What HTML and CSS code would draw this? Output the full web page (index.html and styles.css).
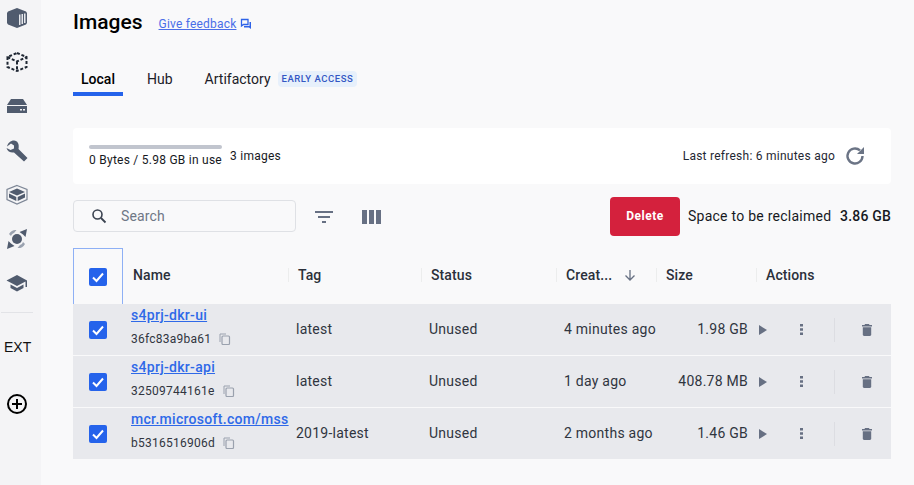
FILE: index.html
```html
<!DOCTYPE html>
<html>
<head>
  <title>Images</title>
  <link rel="stylesheet" href="styles.css">
</head>
<body>

  <div class="app">
    <div class="sidebar">
      <svg class="nav-icon" viewBox="0 0 22 22"><path d="M11 1 20 4.500 21 6V16L20 17.500 11 21 2 17.500 1 16V6L2 4.500Z" fill="#505b6e"/><path d="M13 7.500h1.500V18H13zM15.500 7h1.500V17h-1.500zM18 6.500h1.500V16H18z" fill="#e6e8ec"/></svg>
      <svg class="nav-icon" viewBox="0 0 22 22"><path d="M11 2 20.500 6V16L11 20 1.500 16V6ZM1.500 6 11 10.500 20.500 6M11 10.500V20" fill="none" stroke="#1f2733" stroke-width="2" stroke-dasharray="3 1.800"/></svg>
      <svg class="nav-icon" viewBox="0 0 22 22"><path d="M5 4H17L21 10H1Z" fill="#505b6e"/><path d="M1 11H21V18H1Z" fill="#505b6e"/><path d="M14 14h2v1.500h-2zM17 14h2v1.500h-2z" fill="#f3f4f6"/></svg>
      <svg class="nav-icon" viewBox="0 0 22 22"><path d="M8 .500C4.500 .500 2 3 1 6.500L5 3.500 8 5.500V8.500L4.500 10 .500 8C1.500 11.500 4.500 13 8 12.500L18 21.500 21.500 18 12.500 9C13.500 4 11.500 .500 8 .500Z" fill="#505b6e"/></svg>
      <svg class="nav-icon" viewBox="0 0 22 22"><path d="M11 4.500 19 8 11 11.500 3 8Z" fill="#505b6e"/><path d="M3 9.500 10.300 13V17L3 13.500ZM19 9.500 11.700 13V17L19 13.500Z" fill="#505b6e"/><path d="M11 1.500 21 5.500V15.500L11 20 1 15.500V5.500Z" fill="none" stroke="#7d8696" stroke-width="1.200"/></svg>
      <svg class="nav-icon" viewBox="0 0 22 22"><circle cx="11" cy="11" r="5" fill="#505b6e"/><path d="M3 6C5 2.500 8 1.500 10.500 2L8 5C6.500 5.500 5.500 6.500 5 8Z" fill="#9aa2b0"/><path d="M21 1 19.500 9 17 6.500 13.500 4Z" fill="#505b6e"/><path d="M19 16C17 19.500 14 20.500 11.500 20L14 17C15.500 16.500 16.500 15.500 17 14Z" fill="#9aa2b0"/><path d="M1 21 2.500 13 5 15.500 8.500 18Z" fill="#505b6e"/></svg>
      <svg class="nav-icon" viewBox="0 0 22 22"><path d="M11 3 .500 8.500 11 14 19.500 9.500V15H21V8.500Z" fill="#505b6e"/><path d="M4.500 12.500V16L11 19.500 17.500 16V12.500L11 16Z" fill="#505b6e"/></svg>
      <div class="side-line"></div>
      <div class="ext-label">EXT</div>
      <svg class="add-icon" viewBox="0 0 22 22"><circle cx="11" cy="11" r="9" fill="none" stroke="#000" stroke-width="2"/><path d="M11 6v10M6 11h10" stroke="#000" stroke-width="2"/></svg>
    </div>

    <div class="content">
      <div class="title-row">
        <span class="page-title">Images</span>
        <a class="feedback">Give feedback</a>
        <svg class="feedback-icon" viewBox="0 0 12 12"><path d="M1.500 1.500H8V6.500H3.500L1.500 8Z" fill="none" stroke="#2e63e8" stroke-width="1.300"/><path d="M9.500 4H11V11L9 9.500H4V8H9.500Z" fill="#2e63e8"/></svg>
      </div>

      <div class="tabs">
        <div class="tab tab-active">Local</div>
        <div class="tab tab-hub">Hub</div>
        <div class="tab tab-art">Artifactory</div>
        <span class="early">EARLY ACCESS</span>
      </div>

      <div class="usage">
        <div class="usage-left">
          <div class="usage-bar"></div>
          <div class="usage-text">0 Bytes / 5.98 GB in use</div>
        </div>
        <div class="image-count">3 images</div>
        <div class="refresh">Last refresh: 6 minutes ago</div>
        <svg class="refresh-icon" viewBox="0 0 24 24"><path d="M19.500 12A7.500 7.500 0 1 1 17 6.400" fill="none" stroke="#6b7485" stroke-width="2.400"/><path d="M21 3V10H14Z" fill="#6b7485"/></svg>
      </div>

      <div class="toolbar">
        <div class="search">
          <svg class="search-icon" viewBox="0 0 16 16"><circle cx="6.500" cy="6.500" r="4.500" fill="none" stroke="#3b4350" stroke-width="1.600"/><path d="M10 10l4.500 4.500" stroke="#3b4350" stroke-width="1.800"/></svg>
          <span class="search-text">Search</span>
        </div>
        <svg class="filter-icon" viewBox="0 0 18 12"><path d="M0 0H18V2H0ZM3 5H15V7H3ZM7 10H11V12H7Z" fill="#677083"/></svg>
        <svg class="columns-icon" viewBox="0 0 19 14"><path d="M0 0H5V14H0ZM7 0H12V14H7ZM14 0H19V14H14Z" fill="#677083"/></svg>
        <button class="delete-btn">Delete</button>
        <span class="reclaim">Space to be reclaimed</span>
        <b class="reclaim-size">3.86 GB</b>
      </div>

      <div class="table">
        <div class="row head">
          <div class="check-cell focus"><span class="checkbox"><svg viewBox="0 0 18 18"><path d="M4 9.500 7.500 13 14 5.500" fill="none" stroke="#fff" stroke-width="2"/></svg></span></div>
          <div class="th">Name</div>
          <div class="th sep">Tag</div>
          <div class="th sep">Status</div>
          <div class="th sep">Creat...
            <svg class="sort-icon" viewBox="0 0 12 12"><path d="M6 1V11M1.500 6.500 6 11 10.500 6.500" fill="none" stroke="#677083" stroke-width="1.300"/></svg>
          </div>
          <div class="th sep">Size</div>
          <div class="th sep end">Actions</div>
        </div>

        <div class="row item">
          <div class="check-cell"><span class="checkbox"><svg viewBox="0 0 18 18"><path d="M4 9.500 7.500 13 14 5.500" fill="none" stroke="#fff" stroke-width="2"/></svg></span></div>
          <div class="name-cell">
            <a class="image-name">s4prj-dkr-ui</a>
            <div class="image-id">36fc83a9ba61
              <svg class="copy-icon" viewBox="0 0 12 12"><path d="M1 9V1H7" fill="none" stroke="#9aa1ae" stroke-width="1"/><rect x="3" y="3" width="7.500" height="8.500" rx="1" fill="none" stroke="#9aa1ae" stroke-width="1.200"/></svg>
            </div>
          </div>
          <div class="td">latest</div>
          <div class="td">Unused</div>
          <div class="td">4 minutes ago</div>
          <div class="td size">1.98 GB</div>
          <div class="actions">
            <svg class="play" viewBox="0 0 8 10"><path d="M0 0 8 5 0 10Z" fill="#677083"/></svg>
            <svg class="dots" viewBox="0 0 3 11"><path d="M0 0H3V2.500H0ZM0 4.200H3V6.700H0ZM0 8.500H3V11H0Z" fill="#677083"/></svg>
            <span class="act-line"></span>
            <svg class="trash" viewBox="0 0 10 12"><path d="M3 0H7L7.500 1H10V2.400H0V1H2.500ZM.8 3.200H9.200V11L8.200 12H1.800L.8 11Z" fill="#677083"/></svg>
          </div>
        </div>

        <div class="row item">
          <div class="check-cell"><span class="checkbox"><svg viewBox="0 0 18 18"><path d="M4 9.500 7.500 13 14 5.500" fill="none" stroke="#fff" stroke-width="2"/></svg></span></div>
          <div class="name-cell">
            <a class="image-name">s4prj-dkr-api</a>
            <div class="image-id">32509744161e
              <svg class="copy-icon" viewBox="0 0 12 12"><path d="M1 9V1H7" fill="none" stroke="#9aa1ae" stroke-width="1"/><rect x="3" y="3" width="7.500" height="8.500" rx="1" fill="none" stroke="#9aa1ae" stroke-width="1.200"/></svg>
            </div>
          </div>
          <div class="td">latest</div>
          <div class="td">Unused</div>
          <div class="td">1 day ago</div>
          <div class="td size">408.78 MB</div>
          <div class="actions">
            <svg class="play" viewBox="0 0 8 10"><path d="M0 0 8 5 0 10Z" fill="#677083"/></svg>
            <svg class="dots" viewBox="0 0 3 11"><path d="M0 0H3V2.500H0ZM0 4.200H3V6.700H0ZM0 8.500H3V11H0Z" fill="#677083"/></svg>
            <span class="act-line"></span>
            <svg class="trash" viewBox="0 0 10 12"><path d="M3 0H7L7.500 1H10V2.400H0V1H2.500ZM.8 3.200H9.200V11L8.200 12H1.800L.8 11Z" fill="#677083"/></svg>
          </div>
        </div>

        <div class="row item">
          <div class="check-cell"><span class="checkbox"><svg viewBox="0 0 18 18"><path d="M4 9.500 7.500 13 14 5.500" fill="none" stroke="#fff" stroke-width="2"/></svg></span></div>
          <div class="name-cell">
            <a class="image-name">mcr.microsoft.com/mss</a>
            <div class="image-id">b5316516906d
              <svg class="copy-icon" viewBox="0 0 12 12"><path d="M1 9V1H7" fill="none" stroke="#9aa1ae" stroke-width="1"/><rect x="3" y="3" width="7.500" height="8.500" rx="1" fill="none" stroke="#9aa1ae" stroke-width="1.200"/></svg>
            </div>
          </div>
          <div class="td">2019-latest</div>
          <div class="td">Unused</div>
          <div class="td">2 months ago</div>
          <div class="td size">1.46 GB</div>
          <div class="actions">
            <svg class="play" viewBox="0 0 8 10"><path d="M0 0 8 5 0 10Z" fill="#677083"/></svg>
            <svg class="dots" viewBox="0 0 3 11"><path d="M0 0H3V2.500H0ZM0 4.200H3V6.700H0ZM0 8.500H3V11H0Z" fill="#677083"/></svg>
            <span class="act-line"></span>
            <svg class="trash" viewBox="0 0 10 12"><path d="M3 0H7L7.500 1H10V2.400H0V1H2.500ZM.8 3.200H9.200V11L8.200 12H1.800L.8 11Z" fill="#677083"/></svg>
          </div>
        </div>
      </div>
    </div>
  </div>

</body>
</html>
```

FILE: styles.css
```css
html, body {
  margin: 0;
  height: 100%;
  overflow: hidden;
}

body {
  background-color: #f9f9fa;
  font-family: 'Roboto', sans-serif;
  color: #17191e;
}

.app {
  display: flex;
  height: 485px;
}

/* left bar */
.sidebar {
  width: 41px;
  flex-shrink: 0;
  background-color: #f4f4f6;
  display: flex;
  flex-direction: column;
  align-items: flex-start;
}

.nav-icon {
  width: 22px;
  height: 22px;
  margin: 0 0 22.2px 6px;
  flex-shrink: 0;
}

.nav-icon:first-child {
  margin-top: 7px;
}

.side-line {
  width: 32px;
  height: 1px;
  background-color: #e2e3e7;
  margin: -4px 0 0 1px;
}

.ext-label {
  font-family: 'Liberation Sans', sans-serif;
  font-size: 14px;
  line-height: 16px;
  margin: 26px 0 0 4px;
  color: #111;
}

.add-icon {
  width: 22px;
  height: 22px;
  margin: 38px 0 0 6px;
}

/* main part */
.content {
  width: 818px;
  margin-left: 32px;
}

.title-row {
  display: flex;
  align-items: center;
  height: 24px;
  margin-top: 10px;
}

.page-title {
  font-size: 21px;
  font-weight: 500;
  color: #000;
}

.feedback {
  font-size: 12px;
  letter-spacing: .2px;
  color: #4a6ee8;
  text-decoration: underline;
  margin: 3px 0 0 16px;
}

.feedback-icon {
  width: 12px;
  height: 12px;
  margin: 4px 0 0 4px;
}

.tabs {
  display: flex;
  align-items: center;
  height: 28px;
  margin-top: 31px;
  font-size: 14px;
  position: relative;
}

.tab {
  line-height: 28px;
  color: #1c2027;
}

.tab-active {
  width: 50px;
  text-align: center;
  font-weight: 500;
  height: 31px;
  margin-top: 3px;
  border-bottom: 4px solid #2563eb;
  box-sizing: border-box;
  color: #000;
}

.tab-hub {
  margin-left: 24px;
}

.tab-art {
  margin-left: 32px;
}

.early {
  font-size: 9.500px;
  font-weight: 500;
  letter-spacing: .55px;
  color: #3357c4;
  background-color: #e7f0fb;
  border-radius: 4px;
  padding: 2px 4px;
  margin-left: 7px;
  line-height: 12px;
}

.usage {
  display: flex;
  align-items: center;
  height: 56px;
  margin-top: 35px;
  background-color: #fff;
  border-radius: 4px;
  font-size: 12px;
  letter-spacing: .25px;
}

.usage-left {
  margin-left: 16px;
  width: 133px;
}

.usage-bar {
  height: 4px;
  background-color: #c1c5ce;
  border-radius: 2px;
  margin-bottom: 4px;
}

.usage-text {
  line-height: 14px;
  white-space: nowrap;
}

.image-count {
  margin-left: 8px;
  margin-top: -1px;
}

.refresh {
  margin-left: auto;
  color: #1f2733;
}

.refresh-icon {
  width: 24px;
  height: 24px;
  margin: 0 24px 0 8px;
}

.toolbar {
  display: flex;
  align-items: center;
  height: 40px;
  margin-top: 12px;
}

.search {
  width: 221px;
  height: 30px;
  border: 1px solid #dfe1e5;
  border-radius: 4px;
  display: flex;
  align-items: center;
  margin-top: -1px;
}

.search-icon {
  width: 16px;
  height: 16px;
  margin-left: 17px;
}

.search-text {
  font-size: 14px;
  letter-spacing: .15px;
  color: #6f7785;
  margin-left: 14px;
}

.filter-icon {
  width: 18px;
  height: 12px;
  margin-left: 19px;
  margin-top: 2px;
}

.columns-icon {
  width: 19px;
  height: 14px;
  margin-left: 29px;
  margin-top: 2px;
}

.delete-btn {
  width: 70px;
  height: 39px;
  margin-left: 229px;
  border: none;
  border-radius: 4px;
  background-color: #d4213d;
  color: #fff;
  font-family: 'Roboto', sans-serif;
  font-size: 12px;
  font-weight: 700;
  letter-spacing: .5px;
}

.reclaim {
  font-size: 14px;
  letter-spacing: .25px;
  margin-left: 8px;
}

.reclaim-size {
  font-size: 14px;
  font-weight: 500;
  letter-spacing: .2px;
  margin-left: auto;
}

/* table */
.table {
  margin-top: 12px;
}

.row {
  display: grid;
  grid-template-columns: 50px 165px 133px 135px 100px 100px 135px;
}

.head {
  height: 56px;
  align-items: center;
}

.item {
  height: 51px;
  background-color: #e8e9ed;
  margin-bottom: 1px;
  align-items: center;
}

.check-cell {
  display: flex;
  align-items: center;
  justify-content: center;
  height: 100%;
}

.focus {
  box-sizing: border-box;
  border: 1px solid #8eb0f5;
  border-bottom: none;
}

.checkbox {
  width: 18px;
  height: 18px;
  background-color: #2563eb;
  border-radius: 2px;
  display: block;
}

.checkbox svg {
  display: block;
  width: 18px;
  height: 18px;
}

.th {
  font-size: 14px;
  font-weight: 500;
  letter-spacing: .1px;
  color: #2b303a;
  padding-left: 10px;
  display: flex;
  align-items: center;
  height: 14px;
  margin-top: -2px;
}

.sep {
  border-left: 1px solid #eceded;
  padding-left: 9px;
}

.sort-icon {
  width: 12px;
  height: 12px;
  margin-left: 12px;
}

.name-cell {
  padding-left: 8px;
  white-space: nowrap;
  margin-top: -7px;
}

.image-name {
  font-size: 14px;
  font-weight: 500;
  letter-spacing: .3px;
  line-height: 16px;
  color: #2f69e8;
  text-decoration: underline;
  display: block;
}

.image-id {
  font-size: 12px;
  letter-spacing: .25px;
  line-height: 14px;
  margin-top: 9px;
  color: #30353f;
  display: flex;
  align-items: center;
}

.copy-icon {
  width: 12px;
  height: 12px;
  margin-left: 8px;
}

.td {
  font-size: 14px;
  letter-spacing: .25px;
  color: #30353f;
  padding-left: 8px;
  margin-top: -2px;
}

.size {
  padding: 0 8px 0 0;
  text-align: right;
}

.actions {
  position: relative;
  height: 100%;
  display: flex;
  align-items: center;
}

.play {
  width: 8px;
  height: 10px;
  margin-left: 3px;
}

.dots {
  width: 3px;
  height: 11px;
  margin-left: 33px;
}

.act-line {
  width: 1px;
  height: 24px;
  background-color: #dcdde2;
  margin-left: 31px;
}

.trash {
  width: 10px;
  height: 12px;
  margin-left: 27px;
}
```
